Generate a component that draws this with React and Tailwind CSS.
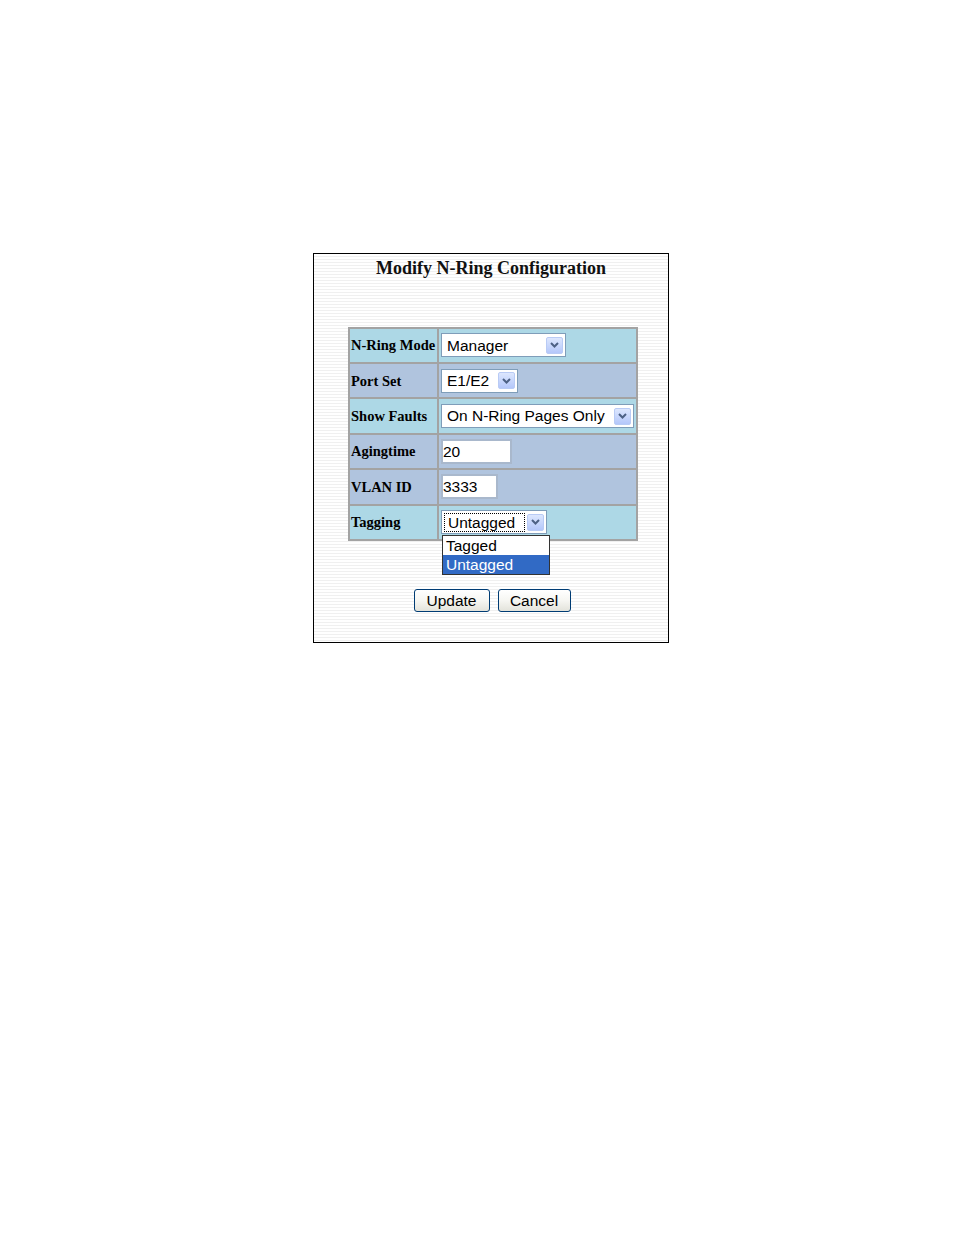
import React from "react";

const sans = "font-['Liberation_Sans',Arial,sans-serif]";
const serif = "font-['Liberation_Serif','Times_New_Roman',serif]";

const Arrow = () => (
  <span className="mr-[2px] flex h-[17px] w-[17px] shrink-0 items-center justify-center rounded-[2px] border border-[#b9cbf5] bg-gradient-to-b from-[#dde7fe] to-[#b4c7fa]">
    <svg width="9" height="6" viewBox="0 0 9 6">
      <path d="M1 1 L4.5 4.5 L8 1" fill="none" stroke="#4d6185" strokeWidth="2" />
    </svg>
  </span>
);

const Select = ({ value, width, focused, children }) => (
  <div className={`relative flex h-[24px] items-center border border-[#7f9db9] bg-white ${width}`}>
    {focused ? (
      <span className="ml-[2px] flex h-[19px] flex-1 items-center border border-dotted border-black pl-[3px]">
        <span className={`${sans} text-[15.5px] leading-none text-black`}>{value}</span>
      </span>
    ) : (
      <span className={`${sans} flex-1 pl-[5px] text-[15.5px] leading-none text-black`}>{value}</span>
    )}
    <span className="ml-[2px]">
      <Arrow />
    </span>
    {children}
  </div>
);

const TextBox = ({ value, width }) => (
  <div className={`flex h-[25px] items-center border-2 border-[#a9b8cc] bg-white ${width}`}>
    <span className={`${sans} text-[15.5px] leading-none text-black`}>{value}</span>
  </div>
);

const rows = [
  { label: "N-Ring Mode", bg: "bg-[#add8e6]", select: "Manager", width: "w-[125px]" },
  { label: "Port Set", bg: "bg-[#b0c4de]", select: "E1/E2", width: "w-[77px]" },
  { label: "Show Faults", bg: "bg-[#add8e6]", select: "On N-Ring Pages Only", width: "w-[193px]" },
  { label: "Agingtime", bg: "bg-[#b0c4de]", text: "20", width: "w-[71px]" },
  { label: "VLAN ID", bg: "bg-[#b0c4de]", text: "3333", width: "w-[57px]" },
  { label: "Tagging", bg: "bg-[#add8e6]", select: "Untagged", width: "w-[106px]", focused: true },
];

const DropList = () => (
  <div className={`${sans} absolute left-0 top-[24px] z-10 w-[108px] border border-[#333] bg-white text-[15.5px] leading-none`}>
    <div className="flex h-[19px] items-center pl-[3px] text-black">Tagged</div>
    <div className="flex h-[19px] items-center bg-[#316ac5] pl-[3px] text-white">Untagged</div>
  </div>
);

const Button = ({ children, width }) => (
  <button
    className={`${sans} h-[23px] ${width} rounded-[3px] border border-[#003c74] bg-gradient-to-b from-white via-[#f6f6f2] to-[#e3e3db] text-[15.5px] leading-none text-black`}
  >
    {children}
  </button>
);

export default function App() {
  return (
    <div className="min-h-[1235px] w-[954px] bg-white pl-[313px] pt-[253px]">
      <div className="w-[356px] border border-black bg-[repeating-linear-gradient(to_bottom,#ffffff_0px,#ffffff_2px,#f0f0f0_2px,#f0f0f0_3px)] pb-[30px]">
        <h1 className={`${serif} pt-[4px] text-center text-[18px] font-bold leading-[1.15] text-[#111]`}>
          Modify N-Ring Configuration
        </h1>

        <div className="ml-[34px] mt-[48px] grid w-[290px] grid-cols-[87px_197px] gap-[2px] bg-[#a3a3a3] p-[2px]">
          {rows.map((row) => (
            <React.Fragment key={row.label}>
              <div className={`flex h-[33.4px] items-center pl-[1px] ${row.bg}`}>
                <span className={`${serif} whitespace-nowrap text-[14.5px] font-bold leading-none text-black`}>
                  {row.label}
                </span>
              </div>
              <div className={`flex h-[33.4px] items-center pl-[2px] ${row.bg}`}>
                {row.select ? (
                  <Select value={row.select} width={row.width} focused={row.focused}>
                    {row.focused && <DropList />}
                  </Select>
                ) : (
                  <TextBox value={row.text} width={row.width} />
                )}
              </div>
            </React.Fragment>
          ))}
        </div>

        <div className="mt-[48px] flex justify-center gap-[8px] pl-[2px]">
          <Button width="w-[76px]">Update</Button>
          <Button width="w-[73px]">Cancel</Button>
        </div>
      </div>
    </div>
  );
}
